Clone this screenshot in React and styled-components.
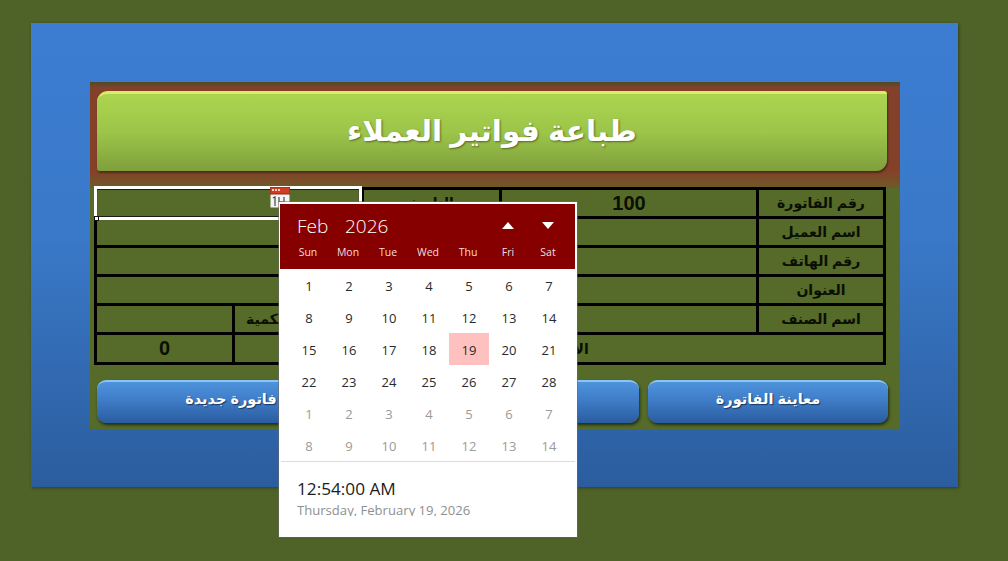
import React from "react";
import styled, { createGlobalStyle } from "styled-components";

const GlobalStyle = createGlobalStyle`
  html, body {
    margin: 0;
    padding: 0;
    background: #4f6228;
  }
  * {
    box-sizing: border-box;
  }
`;

const arabicFont = `"Liberation Sans", "DejaVu Sans", sans-serif`;
const calendarFont = `"Open Sans", "Noto Sans", sans-serif`;

const Page = styled.div`
  width: 1008px;
  height: 561px;
  padding: 23px 0 0 31px;
  overflow: hidden;
`;

const Panel = styled.div`
  width: 927px;
  height: 464px;
  padding: 59px 58px 58px 59px;
  background: linear-gradient(180deg, #3c7dd2 0%, #3a79c9 45%, #2b5d9e 100%);
  box-shadow: 1px 1px 3px rgba(0, 0, 0, 0.35);
`;

const Form = styled.div`
  position: relative;
  width: 810px;
  height: 347px;
  background: #566a29;
  display: flex;
  flex-direction: column;
`;

const Banner = styled.div`
  height: 106px;
  padding: 9px 13px 0 7px;
  background: linear-gradient(180deg, #4f4a28 0%, #84412a 6%, #84412a 84%, #6d5a28 100%);
`;

const Title = styled.div`
  height: 80px;
  border-radius: 11px 3px 11px 3px;
  border-top: 3px solid #dcec68;
  background: linear-gradient(180deg, #abd54f 0%, #9cc549 50%, #7f9f3c 100%);
  box-shadow: 1px 2px 2px rgba(40, 30, 10, 0.6);
  display: flex;
  align-items: center;
  justify-content: center;
  padding-bottom: 4px;
  direction: rtl;
  color: #fff;
  font-family: ${arabicFont};
  font-weight: 700;
  font-size: 29.5px;
  text-shadow: 1px 1px 2px rgba(60, 70, 20, 0.7);
`;

const Table = styled.div`
  position: relative;
  width: 792px;
  margin-left: 4px;
  margin-top: -1px;
  border: 3px solid #000;
  display: flex;
  flex-direction: column;
`;

const Row = styled.div`
  display: grid;
  grid-template-columns: ${(p) => p.$cols};
  height: ${(p) => p.$height || 29}px;
  border-bottom: ${(p) => (p.$last ? "none" : "3px solid #000")};
`;

const Cell = styled.div`
  display: flex;
  align-items: center;
  justify-content: center;
  direction: rtl;
  font-family: ${arabicFont};
  font-weight: 700;
  font-size: ${(p) => p.$size || 14}px;
  color: #0b0f02;
  border-left: ${(p) => (p.$first ? "none" : "3px solid #000")};
`;

const SelectedCell = styled.div`
  position: absolute;
  left: -3px;
  top: -4px;
  width: 268px;
  height: 34px;
  border: 3px solid #fff;
  outline: 1px solid rgba(70, 70, 70, 0.4);
  outline-offset: -4px;
`;

const Handle = styled.span`
  position: absolute;
  left: -3px;
  bottom: -4px;
  width: 5px;
  height: 5px;
  background: #fff;
  border: 1px solid #111;
`;

const CalendarIcon = styled.svg`
  position: absolute;
  left: 173px;
  top: -3px;
`;

const Buttons = styled.div`
  display: grid;
  grid-template-columns: 268px 265px 240px;
  gap: 9px;
  margin: 15px 0 0 7px;
`;

const ActionButton = styled.div`
  height: 43px;
  border-radius: 9px;
  border-top: 2px solid #8cc4f2;
  background: linear-gradient(180deg, #4f93dd 0%, #3f7cc7 45%, #2a5c9f 100%);
  box-shadow: 1px 2px 3px rgba(15, 25, 10, 0.75);
  display: flex;
  align-items: center;
  justify-content: center;
  direction: rtl;
  color: #fff;
  font-family: ${arabicFont};
  font-weight: 700;
  font-size: 14.5px;
  padding-bottom: 7px;
  text-shadow: 1px 1px 1px rgba(10, 30, 60, 0.7);
`;

const Calendar = styled.div`
  position: absolute;
  left: 189px;
  top: 120px;
  width: 298px;
  height: 335px;
  background: #fff;
  border: 2px solid #fff;
  box-shadow: 0 0 0 1px rgba(110, 110, 110, 0.55), 0 1px 1px rgba(60, 60, 60, 0.5);
  font-family: ${calendarFont};
`;

const CalendarHead = styled.div`
  height: 65px;
  background: #860000;
  color: #fff;
  margin: 0 0 0 -1px;
`;

const MonthBar = styled.div`
  height: 38px;
  padding: 5px 21px 0 17px;
  display: flex;
  align-items: center;
  font-size: 19px;
  font-weight: 300;
`;

const MonthLabel = styled.span`
  width: 48px;
`;

const Spacer = styled.span`
  flex: 1;
`;

const Arrow = styled.span`
  width: 0;
  height: 0;
  margin-left: 28px;
  border-left: 6px solid transparent;
  border-right: 6px solid transparent;
  border-bottom: ${(p) => (p.$up ? "7px solid #fff" : "none")};
  border-top: ${(p) => (p.$up ? "none" : "7px solid #fff")};
`;

const Week = styled.div`
  display: grid;
  grid-template-columns: repeat(7, 40px);
  padding-left: 8px;
`;

const WeekDay = styled.span`
  text-align: center;
  font-size: 10.5px;
  line-height: 20px;
  color: #f3dede;
`;

const Days = styled.div`
  display: grid;
  grid-template-columns: repeat(7, 40px);
  grid-auto-rows: 32px;
  padding: 0 0 0 8px;
  height: 193px;
  border-bottom: 1px solid #dcdcdc;
`;

const Day = styled.span`
  display: flex;
  align-items: center;
  justify-content: center;
  padding-top: 2px;
  font-size: 13px;
  color: ${(p) => (p.$muted ? "#9a9a9a" : "#2a2a2a")};
  background: ${(p) => (p.$active ? "#ffc0c0" : "transparent")};
`;

const TimeBox = styled.div`
  padding: 16px 0 0 16px;
`;

const Time = styled.div`
  font-size: 17.2px;
  line-height: 22px;
  color: #1c1c1c;
`;

const LongDate = styled.div`
  margin-top: 2px;
  height: 14px;
  overflow: hidden;
  font-size: 13.1px;
  line-height: 17px;
  color: #8f8f8f;
`;

const weekDays = ["Sun", "Mon", "Tue", "Wed", "Thu", "Fri", "Sat"];

const days = [
  ...Array.from({ length: 28 }, (_, i) => ({ n: i + 1 })),
  ...Array.from({ length: 14 }, (_, i) => ({ n: i + 1, muted: true })),
];

const labelCols = "659px 127px";

export default function App() {
  return (
    <>
      <GlobalStyle />
      <Page>
        <Panel>
          <Form>
            <Banner>
              <Title>طباعة فواتير العملاء</Title>
            </Banner>
            <Table>
              <SelectedCell>
                <Handle />
              </SelectedCell>
              <CalendarIcon width="20" height="21" viewBox="0 0 20 21">
                <rect x="0.5" y="0.5" width="19" height="20" fill="#f4f4f4" />
                <rect x="0" y="0" width="20" height="7" fill="#d23c22" stroke="#8d2a18" strokeWidth="1" />
                <rect x="2" y="2" width="2" height="2" fill="#f6d0c8" />
                <rect x="5" y="2" width="2" height="2" fill="#f6d0c8" />
                <rect x="8" y="2" width="2" height="2" fill="#f6d0c8" />
                <path d="M3 11l2-1v9M9 10v5h4M14 10v9" stroke="#444" strokeWidth="1.2" fill="none" />
              </CalendarIcon>
              <Row $cols="264px 138px 257px 127px">
                <Cell $first />
                <Cell>التاريخ</Cell>
                <Cell $size={20}>100</Cell>
                <Cell>رقم الفاتورة</Cell>
              </Row>
              <Row $cols={labelCols}>
                <Cell $first />
                <Cell>اسم العميل</Cell>
              </Row>
              <Row $cols={labelCols}>
                <Cell $first />
                <Cell>رقم الهاتف</Cell>
              </Row>
              <Row $cols={labelCols}>
                <Cell $first />
                <Cell>العنوان</Cell>
              </Row>
              <Row $cols="135px 67px 457px 127px">
                <Cell $first />
                <Cell>الكمية</Cell>
                <Cell />
                <Cell>اسم الصنف</Cell>
              </Row>
              <Row $cols="135px 651px" $height={27} $last>
                <Cell $first $size={20}>0</Cell>
                <Cell>الإجمالي</Cell>
              </Row>
            </Table>
            <Buttons>
              <ActionButton>فاتورة جديدة</ActionButton>
              <ActionButton />
              <ActionButton>معاينة الفاتورة</ActionButton>
            </Buttons>
            <Calendar>
              <CalendarHead>
                <MonthBar>
                  <MonthLabel>Feb</MonthLabel>
                  <span>2026</span>
                  <Spacer />
                  <Arrow $up />
                  <Arrow />
                </MonthBar>
                <Week>
                  {weekDays.map((d) => (
                    <WeekDay key={d}>{d}</WeekDay>
                  ))}
                </Week>
              </CalendarHead>
              <Days>
                {days.map((d, i) => (
                  <Day key={i} $muted={d.muted} $active={!d.muted && d.n === 19}>
                    {d.n}
                  </Day>
                ))}
              </Days>
              <TimeBox>
                <Time>12:54:00 AM</Time>
                <LongDate>Thursday, February 19, 2026</LongDate>
              </TimeBox>
            </Calendar>
          </Form>
        </Panel>
      </Page>
    </>
  );
}
